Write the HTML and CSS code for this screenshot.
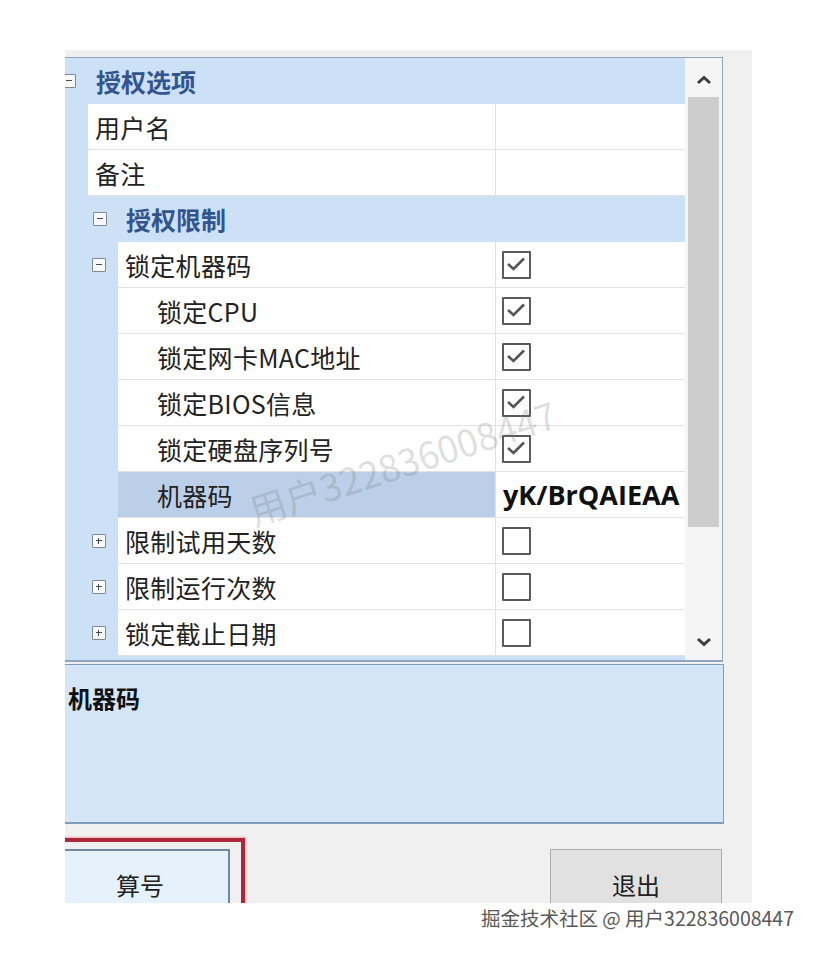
FILE: index.html
```html
<!DOCTYPE html>
<html lang="zh">
<head>
<meta charset="utf-8">
<title>授权选项</title>
<link rel="stylesheet" href="styles.css">
</head>
<body>
<div class="page">
  <div class="window">
    <div class="grid">
      <div class="rows">
        <div class="row cat l0"><i class="tog minus"></i><span class="ctext">授权选项</span></div>
        <div class="row"><span class="gut g1"></span><span class="name">用户名</span><span class="val"></span></div>
        <div class="row"><span class="gut g1"></span><span class="name">备注</span><span class="val"></span></div>
        <div class="row cat l1"><i class="tog minus"></i><span class="ctext">授权限制</span></div>
        <div class="row"><span class="gut g2"><i class="tog minus"></i></span><span class="name">锁定机器码</span><span class="val"><i class="cb"><svg viewBox="0 0 24 23" width="24" height="23"><polyline points="4,11 9.5,16 20,5.5" fill="none" stroke="#555" stroke-width="2.6"/></svg></i></span></div>
        <div class="row"><span class="gut g2"></span><span class="name sub">锁定CPU</span><span class="val"><i class="cb"><svg viewBox="0 0 24 23" width="24" height="23"><polyline points="4,11 9.5,16 20,5.5" fill="none" stroke="#555" stroke-width="2.6"/></svg></i></span></div>
        <div class="row"><span class="gut g2"></span><span class="name sub">锁定网卡MAC地址</span><span class="val"><i class="cb"><svg viewBox="0 0 24 23" width="24" height="23"><polyline points="4,11 9.5,16 20,5.5" fill="none" stroke="#555" stroke-width="2.6"/></svg></i></span></div>
        <div class="row"><span class="gut g2"></span><span class="name sub">锁定BIOS信息</span><span class="val"><i class="cb"><svg viewBox="0 0 24 23" width="24" height="23"><polyline points="4,11 9.5,16 20,5.5" fill="none" stroke="#555" stroke-width="2.6"/></svg></i></span></div>
        <div class="row"><span class="gut g2"></span><span class="name sub">锁定硬盘序列号</span><span class="val"><i class="cb"><svg viewBox="0 0 24 23" width="24" height="23"><polyline points="4,11 9.5,16 20,5.5" fill="none" stroke="#555" stroke-width="2.6"/></svg></i></span></div>
        <div class="row"><span class="gut g2"></span><span class="name sub sel">机器码</span><span class="val code">yK/BrQAIEAA</span></div>
        <div class="row"><span class="gut g2"><i class="tog plus"></i></span><span class="name">限制试用天数</span><span class="val"><i class="cb"></i></span></div>
        <div class="row"><span class="gut g2"><i class="tog plus"></i></span><span class="name">限制运行次数</span><span class="val"><i class="cb"></i></span></div>
        <div class="row"><span class="gut g2"><i class="tog plus"></i></span><span class="name">锁定截止日期</span><span class="val"><i class="cb"></i></span></div>
      </div>
      <div class="scroll">
        <div class="arrow up"><svg width="16" height="10" viewBox="0 0 16 10"><polyline points="2,8 8,2.5 14,8" fill="none" stroke="#3d3d3d" stroke-width="3"/></svg></div>
        <div class="thumb"></div>
        <div class="track"></div>
        <div class="arrow down"><svg width="16" height="10" viewBox="0 0 16 10"><polyline points="2,2 8,7.5 14,2" fill="none" stroke="#3d3d3d" stroke-width="3"/></svg></div>
      </div>
    </div>
    <div class="desc"><b>机器码</b></div>
    <div class="btns">
      <div class="hl"><button class="btn primary">算号</button></div>
      <button class="btn">退出</button>
    </div>
  </div>
  <div class="foot">掘金技术社区 @ 用户322836008447</div>
  <div class="wm">用户322836008447</div>
</div>
</body>
</html>
```
FILE: styles.css
```css
* { box-sizing: border-box; }
html, body { margin: 0; padding: 0; background: #fff; }
body {
  width: 818px;
  height: 954px;
  overflow: hidden;
  font-family: "Noto Sans CJK SC", "Noto Sans", sans-serif;
  color: #222;
}
.page {
  position: relative;
  padding: 50px 0 0 65px;
  height: 954px;
}
.window {
  width: 687px;
  height: 853px;
  background: #f0f0f0;
  overflow: hidden;
  padding-top: 7px;
  display: flex;
  flex-direction: column;
}
.grid {
  margin-left: -30px;
  width: 688px;
  display: flex;
  border-top: 1px solid #8fa6c0;
  border-right: 1px solid #8fa6c0;
  border-bottom: 2px solid #8fa6c0;
}
.rows {
  width: 650px;
  background: #cde1f6;
  padding-bottom: 4px;
  display: flex;
  flex-direction: column;
}
.row {
  display: flex;
  height: 46px;
  font-size: 25px;
  line-height: 46px;
}
.row.cat {
  align-items: center;
  background: #cde1f6;
}
.row.cat .ctext {
  font-weight: bold;
  color: #33558f;
  line-height: 46px;
}
.row.l0 { padding-left: 27px; }
.row.l0 .tog { margin-right: 20px; }
.row.l1 { padding-left: 58px; }
.row.l1 .tog { margin-right: 19px; }
.gut {
  display: flex;
  align-items: center;
  flex: none;
  background: #cde1f6;
}
.gut.g1 { width: 53px; }
.gut.g2 { width: 83px; padding-left: 57px; }
.tog {
  display: block;
  position: relative;
  width: 14px;
  height: 14px;
  border: 1.5px solid #80878f;
  border-radius: 1px;
  background: #f6f8fa;
  flex: none;
}
.tog::before {
  content: "";
  position: absolute;
  left: 2.5px;
  top: 4.75px;
  width: 6px;
  height: 1.5px;
  background: #4a4a4a;
}
.tog.plus::after {
  content: "";
  position: absolute;
  left: 4.75px;
  top: 2.5px;
  width: 1.5px;
  height: 6px;
  background: #4a4a4a;
}
.name {
  flex: 1;
  background: #fff;
  border-bottom: 1px solid #e2e2e2;
  padding-left: 7px;
  white-space: nowrap;
  letter-spacing: 0.3px;
}
.name.sub { padding-left: 39px; }
.name.sel { background: #bccfe8; }
.val {
  width: 190px;
  flex: none;
  background: #fff;
  border-left: 1px solid #e2e2e2;
  border-bottom: 1px solid #e2e2e2;
  display: flex;
  align-items: center;
  padding-left: 6px;
  overflow: hidden;
  white-space: nowrap;
}
.val.code {
  font-family: "Open Sans", "Liberation Sans", sans-serif;
  font-weight: bold;
  font-size: 27px;
  color: #111;
  padding-left: 7px;
}
.cb {
  display: block;
  width: 29px;
  height: 28px;
  border: 2.5px solid #5b5b5b;
  border-radius: 1px;
  background: #fff;
}
.cb svg { display: block; }
.scroll {
  width: 37px;
  flex: none;
  background: #f5f5f5;
  display: flex;
  flex-direction: column;
}
.arrow {
  display: flex;
  align-items: center;
  justify-content: center;
  flex: none;
}
.arrow.up { height: 39px; padding-top: 4px; }
.arrow.down { height: 32px; padding-bottom: 4px; }
.thumb {
  height: 430px;
  margin: 0 3px;
  background: #cdcdcd;
  flex: none;
}
.track { flex: 1; }
.desc {
  margin-left: -30px;
  margin-top: 2px;
  width: 689px;
  height: 160px;
  border: 1px solid #7f9ebe;
  border-bottom-width: 2px;
  background: #d4e6f8;
  padding: 18px 0 0 32px;
  font-size: 24px;
  line-height: 30px;
  color: #111;
  flex: none;
}
.btns {
  display: flex;
  justify-content: space-between;
  align-items: flex-start;
  padding-top: 14px;
  padding-right: 30px;
  margin-left: -20px;
}
.hl {
  border: 4px solid #a9283c;
  box-shadow: 0 0 2px 1px #f2a4ad;
  padding: 7px 11px 0 1px;
}
.btn {
  font-family: "Noto Sans CJK SC", sans-serif;
  font-size: 24px;
  line-height: 32px;
  color: #222;
  height: 60px;
  padding: 19px 0 0;
  border: 1px solid #adadad;
  background: #e1e1e1;
  display: flex;
  justify-content: center;
  align-items: flex-start;
  margin-top: 11px;
  width: 172px;
}
.btn.primary {
  margin-top: 0;
  width: 180px;
  border: 2px solid #6e8aa2;
  background: #e5f1fb;
  padding-top: 18px;
}
.foot {
  text-align: right;
  padding-right: 24px;
  font-size: 19.5px;
  line-height: 30px;
  color: #595959;
  text-shadow: 0 0 2px #fff;
  white-space: nowrap;
}
.wm {
  position: absolute;
  left: 256px;
  top: 490px;
  font-size: 37px;
  line-height: 40px;
  color: rgba(110, 110, 110, 0.22);
  transform-origin: 0 100%;
  transform: rotate(-18deg);
  white-space: nowrap;
  pointer-events: none;
}
```
